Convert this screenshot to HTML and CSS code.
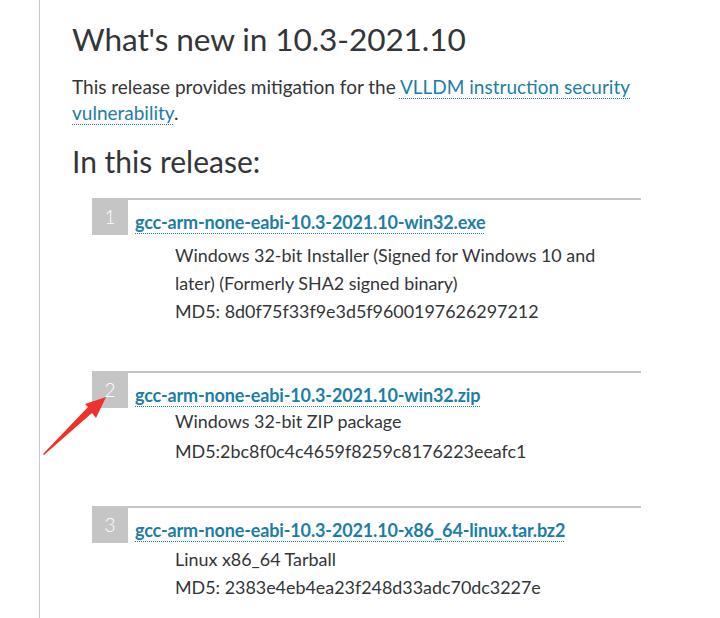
FILE: index.html
```html
<!DOCTYPE html>
<html>
<head>
<meta charset="utf-8">
<link rel="stylesheet" href="styles.css">
</head>
<body>
<main class="page">
  <h1 class="title">What's new in 10.3-2021.10</h1>
  <p class="intro">This release provides mitigation for the <a class="link" href="#">VLLDM instruction security vulnerability</a>.</p>
  <h2 class="subtitle">In this release:</h2>
  <ol class="files">
    <li class="file file-first">
      <span class="num">1</span>
      <div class="body">
        <a class="link file-link" href="#">gcc-arm-none-eabi-10.3-2021.10-win32.exe</a>
        <div class="desc">
          <p>Windows 32-bit Installer (Signed for Windows 10 and later) (Formerly SHA2 signed binary)</p>
          <p>MD5: 8d0f75f33f9e3d5f9600197626297212</p>
        </div>
      </div>
    </li>
    <li class="file file-second">
      <span class="num">2</span>
      <div class="body">
        <a class="link file-link" href="#">gcc-arm-none-eabi-10.3-2021.10-win32.zip</a>
        <div class="desc">
          <p>Windows 32-bit ZIP package</p>
          <p class="md5-wide">MD5:2bc8f0c4c4659f8259c8176223eeafc1</p>
        </div>
      </div>
    </li>
    <li class="file file-last">
      <span class="num">3</span>
      <div class="body">
        <a class="link file-link" href="#">gcc-arm-none-eabi-10.3-2021.10-x86_64-linux.tar.bz2</a>
        <div class="desc">
          <p>Linux x86_64 Tarball</p>
          <p>MD5: 2383e4eb4ea23f248d33adc70dc3227e</p>
        </div>
      </div>
    </li>
  </ol>
  <svg class="arrow" width="80" height="70" viewBox="0 0 80 70" aria-hidden="true">
    <polygon points="2,65 47,18 44,15 65,8 55,29 51,24 3,66" fill="#f0302c"/>
  </svg>
</main>
</body>
</html>
```
FILE: styles.css
```css
html, body {
  margin: 0;
  padding: 0;
  background: #ffffff;
}
body {
  font-family: Lato, "Open Sans", sans-serif;
  color: #333538;
  height: 618px;
  overflow: hidden;
}
.page {
  position: relative;
  margin-left: 39px;
  border-left: 1px solid #c9c9c9;
  padding: 1px 0 0 32px;
  height: 618px;
  box-sizing: border-box;
  width: 610px;
}
.title {
  font-weight: 400;
  font-size: 31.6px;
  line-height: 40px;
  margin: 18px 0 0 0;
  letter-spacing: -0.1px;
}
.intro {
  font-size: 19px;
  line-height: 26px;
  margin: 15px 0 0 0;
  width: 580px;
}
.link {
  color: #1c7ea6;
  text-decoration: underline dotted #1c7ea6;
  text-decoration-thickness: 1px;
  text-underline-offset: 4px;
}
.subtitle {
  font-weight: 400;
  font-size: 30px;
  line-height: 40px;
  margin: 15px 0 0 0;
}
.files {
  list-style: none;
  margin: 17px 0 0 20px;
  padding: 0;
  width: 549px;
}
.file {
  display: flex;
  border-top: 2px solid #c4c4c4;
  margin-bottom: 46px;
}
.file-second {
  margin-bottom: 41px;
}
.file-last {
  margin-bottom: 0;
}
.num {
  flex: 0 0 36px;
  height: 37px;
  margin-top: -2px;
  background: #c4c5c4;
  color: #ffffff;
  font-weight: 300;
  font-size: 19px;
  line-height: 38px;
  text-align: center;
}
.body {
  padding-left: 7px;
  flex: 1;
}
.file-link {
  display: inline-block;
  font-weight: 700;
  font-size: 18px;
  line-height: 20px;
  margin-top: 12px;
  letter-spacing: -0.15px;
}
.desc {
  padding-left: 40px;
  margin-top: 2px;
  font-size: 17.9px;
  line-height: 28px;
  width: 440px;
}
.file-first .desc {
  margin-top: 9px;
}
.file-last .desc {
  margin-top: 5px;
}
.desc p {
  margin: 0;
}
.md5-wide {
  margin-top: 2px !important;
}
.arrow {
  position: absolute;
  left: 1px;
  top: 389px;
}
```
